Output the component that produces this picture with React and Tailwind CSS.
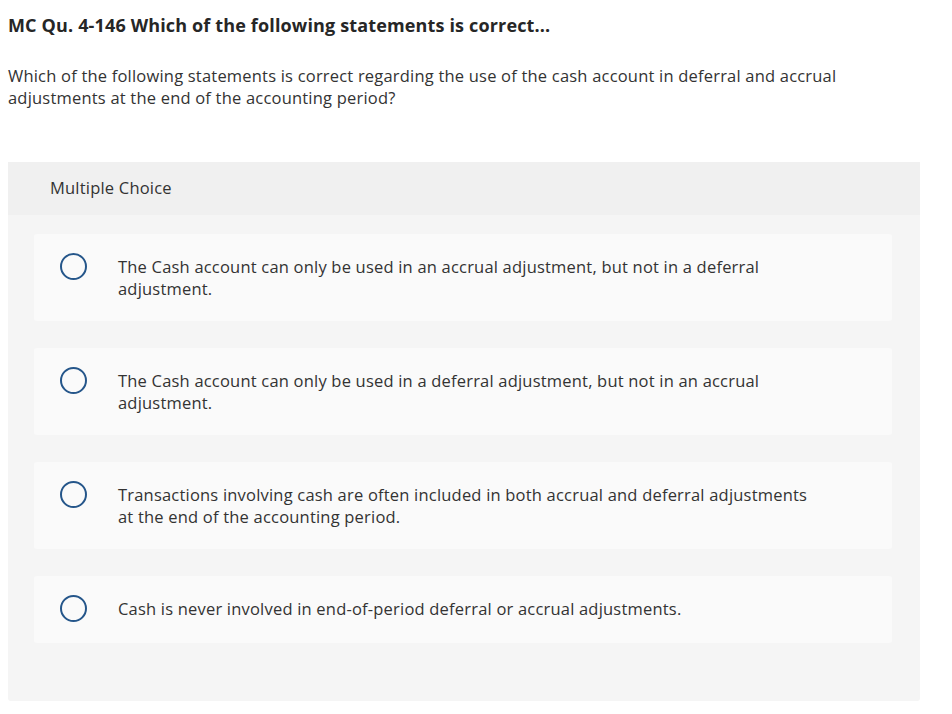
export default function App() {
  const options = [
    "The Cash account can only be used in an accrual adjustment, but not in a deferral adjustment.",
    "The Cash account can only be used in a deferral adjustment, but not in an accrual adjustment.",
    "Transactions involving cash are often included in both accrual and deferral adjustments at the end of the accounting period.",
    "Cash is never involved in end-of-period deferral or accrual adjustments.",
  ];
  return (
    <div className="w-[952px] h-[714px] bg-white text-[#333333]" style={{ fontFamily: "'Open Sans', sans-serif" }}>
      <div className="pl-[8px] pr-[32px]">
        <h1 className="pt-[13px] text-[18px] leading-[24px] font-bold tracking-[0.15px] text-[#262626]">
          MC Qu. 4-146 Which of the following statements is correct...
        </h1>
        <p className="mt-[28px] text-[16.5px] leading-[22px] tracking-[0.2px] w-[880px]">
          Which of the following statements is correct regarding the use of the cash account in deferral and accrual adjustments at the end of the accounting period?
        </p>
        <div className="mt-[53px] w-[912px] rounded-b-[3px] bg-[#f5f5f5] pb-[58px]">
          <div className="h-[53px] bg-[#f0f0f0] pl-[42px] flex items-center text-[16.5px] tracking-[0.2px]">Multiple Choice</div>
          <div className="pt-[19px] pl-[26px] pr-[28px] flex flex-col gap-[27px]">
            {options.map((o, i) => (
              <div key={i} className="bg-[#fafafa] rounded-[3px] pt-[22px] pb-[21px] pl-[26px] flex items-start">
                <div className="w-[27px] h-[27px] shrink-0 rounded-full border-[2.5px] border-[#25568a] mt-[-3px]" />
                <div className="ml-[31px] w-[690px] text-[16.5px] leading-[22px] tracking-[0.2px]">{o}</div>
              </div>
            ))}
          </div>
        </div>
      </div>
    </div>
  );
}
